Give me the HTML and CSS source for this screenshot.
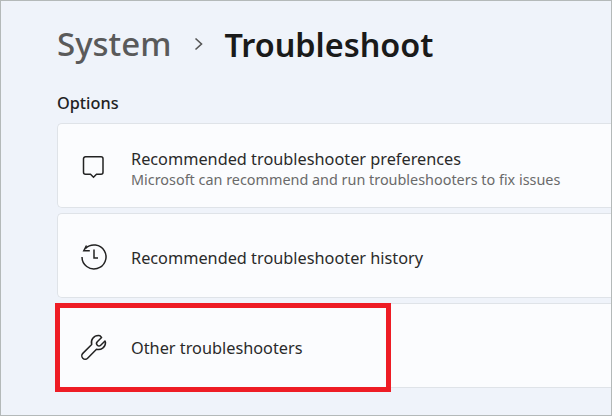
FILE: index.html
```html
<!DOCTYPE html>
<html lang="en">
<head>
<meta charset="utf-8">
<title>Troubleshoot</title>
<link rel="stylesheet" href="styles.css">
</head>
<body>
<main class="window">
  <header class="crumbs">
    <span class="crumb-parent">System</span>
    <svg class="chevron" viewBox="0 0 12 16" width="12" height="16"><path d="M2.5 2.5 8.500 8 2.500 13.500" fill="none" stroke="#555" stroke-width="1.600"/></svg>
    <span class="crumb-current">Troubleshoot</span>
  </header>
  <h2 class="section">Options</h2>
  <section class="cards">
    <div class="card">
      <svg class="icon" viewBox="0 0 26 26" width="26" height="26"><path d="M4.500 2.800h15.500a2 2 0 0 1 2 2v13.400a2 2 0 0 1-2 2h-4.500l-3 3-3-3h-5a2 2 0 0 1-2-2V4.800a2 2 0 0 1 2-2z" fill="none" stroke="#222" stroke-width="1.500"/></svg>
      <div class="text">
        <div class="title">Recommended troubleshooter preferences</div>
        <div class="sub">Microsoft can recommend and run troubleshooters to fix issues</div>
      </div>
    </div>
    <div class="card">
      <svg class="icon" viewBox="0 0 26 26" width="26" height="26"><g fill="none" stroke="#222" stroke-width="1.500"><path d="M4.500 4.500A12 12 0 1 1 1 13"/><path d="M5.500 1.500 2.800 6.800H8.800"/><path d="M13 5.500v8.500h4"/></g></svg>
      <div class="text"><div class="title">Recommended troubleshooter history</div></div>
    </div>
    <div class="card">
      <svg class="icon" viewBox="0 0 26 26" width="26" height="26"><path d="M17.500 1.500a7 7 0 0 0-6.800 9L1.800 19.400a3.300 3.300 0 0 0 4.800 4.800l8.900-9a7 7 0 0 0 9-6.800l-.5-1.400-4.300 4.200a2.400 2.400 0 0 1-3.400-3.400L20.600 3.500 19 1.700z" fill="none" stroke="#222" stroke-width="1.500" stroke-linejoin="round"/></svg>
      <div class="text"><div class="title">Other troubleshooters</div></div>
    </div>
  </section>
  <div class="highlight"></div>
</main>
</body>
</html>
```
FILE: styles.css
```css
html, body { margin: 0; padding: 0; }
body { width: 612px; height: 416px; overflow: hidden; }
.window {
  position: relative;
  box-sizing: border-box;
  width: 612px;
  height: 416px;
  border: 1px solid #b4b9b9;
  background: #eff3fa;
  padding: 0 0 0 56px;
  font-family: "Noto Sans", "Open Sans", sans-serif;
  color: #222;
  overflow: hidden;
}
.crumbs { display: flex; align-items: center; height: 85px; margin-bottom: 4px; }
.crumb-parent { font-size: 33px; font-weight: 500; color: #5a5a5a; }
.chevron { margin: 0 19px 0 22px; }
.crumb-current { font-size: 32.400px; font-weight: 600; color: #1a1a1a; }
.section { margin: 0; height: 33px; line-height: 26px; font-size: 16.300px; font-weight: 500; color: #222; }
.cards { display: flex; flex-direction: column; gap: 5px; }
.card {
  box-sizing: border-box;
  display: flex;
  align-items: center;
  height: 85px;
  padding-top: 3px;
  background: #fbfcfe;
  border: 1px solid #dfe3e8;
  border-right: 0;
  border-radius: 5px 0 0 5px;
  padding-left: 23px;
}
.icon { flex: none; width: 26px; height: 26px; }
.text { margin-left: 24px; padding-top: 3px; }
.title { font-size: 16.300px; line-height: 21px; color: #2a2a2a; }
.sub { font-size: 14.400px; line-height: 19px; color: #6a6a6a; }
.highlight {
  position: absolute;
  left: 54px;
  top: 302px;
  width: 326px;
  height: 79px;
  border: 5px solid #ee1c25;
}
```
